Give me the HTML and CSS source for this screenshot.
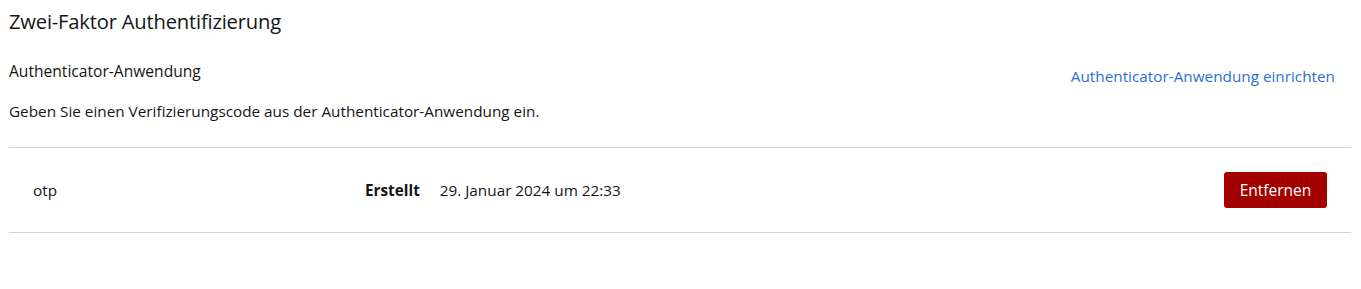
FILE: index.html
```html
<!DOCTYPE html>
<html lang="de">
<head>
<meta charset="utf-8">
<title>Zwei-Faktor Authentifizierung</title>
<link rel="stylesheet" href="styles.css">
</head>
<body>
<main class="page">
  <h1 class="title">Zwei-Faktor Authentifizierung</h1>
  <section class="section">
    <div class="section-head">
      <div class="section-text">
        <h2 class="subtitle">Authenticator-Anwendung</h2>
        <p class="desc">Geben Sie einen Verifizierungscode aus der Authenticator-Anwendung ein.</p>
      </div>
      <a class="link" href="#">Authenticator-Anwendung einrichten</a>
    </div>
    <ul class="list">
      <li class="row">
        <span class="cell-name">otp</span>
        <span class="cell-meta"><strong class="meta-label">Erstellt</strong><span class="meta-value">29. Januar 2024 um 22:33</span></span>
        <button class="btn-danger" type="button">Entfernen</button>
      </li>
    </ul>
  </section>
</main>
</body>
</html>
```

FILE: styles.css
```css
* { box-sizing: border-box; }
html, body { margin: 0; padding: 0; background: #fff; }
body {
  font-family: "Open Sans", "Noto Sans", sans-serif;
  color: #151515;
}
.page {
  padding: 7px 10px 0 9px;
}
.title {
  margin: 0;
  font-size: 20.2px;
  font-weight: 400;
  line-height: 28px;
  letter-spacing: -0.2px;
}
.section { margin-top: 25px; }
.section-head {
  display: flex;
  justify-content: space-between;
  align-items: flex-start;
}
.subtitle {
  margin: 0;
  font-size: 15.6px;
  font-weight: 500;
  line-height: 22px;
}
.desc {
  margin: 18px 0 0;
  font-size: 15.3px;
  line-height: 22px;
}
.link {
  margin-top: 5px;
  margin-right: 16px;
  color: #2b6fd6;
  text-decoration: none;
  font-size: 15.3px;
  line-height: 22px;
}
.list {
  list-style: none;
  margin: 25px 0 0;
  padding: 0;
  border-top: 1px solid #d2d2d2;
  border-bottom: 1px solid #d2d2d2;
}
.row {
  display: flex;
  align-items: center;
  height: 84px;
  padding: 0 24px;
  font-size: 15.3px;
}
.cell-name { width: 332px; }
.cell-meta { flex: 1; display: flex; gap: 20px; }
.meta-label { font-weight: 700; color: #151515; }
.meta-value { color: #151515; }
.btn-danger {
  font-family: inherit;
  font-size: 15.5px;
  color: #fff;
  background: #a30000;
  border: 0;
  border-radius: 3px;
  height: 36px;
  width: 103px;
  padding: 0;
  cursor: pointer;
}
```
